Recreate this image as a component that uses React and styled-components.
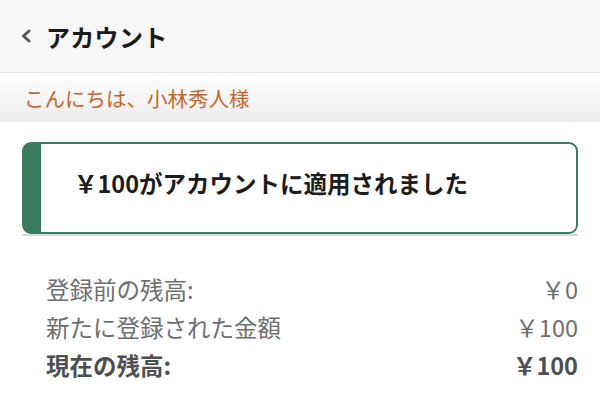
import React from "react";
import styled, { createGlobalStyle } from "styled-components";

const Global = createGlobalStyle`
  html, body { margin: 0; padding: 0; background: #ffffff; }
  body { font-family: "Noto Sans CJK JP", "Noto Sans", sans-serif; }
`;

const Page = styled.div`
  width: 600px;
  height: 417px;
  background: #ffffff;
  overflow: hidden;
`;

const Header = styled.header`
  height: 72px;
  background: #f7f7f7;
  border-bottom: 1px solid #e2e2e2;
  display: flex;
  align-items: center;
  padding-left: 20px;
  gap: 14px;
`;

const Back = styled.svg`
  width: 12px;
  height: 14px;
`;

const Title = styled.h1`
  margin: 0;
  font-size: 24px;
  font-weight: 700;
  color: #1a1a1a;
  letter-spacing: 0.3px;
`;

const Greeting = styled.div`
  height: 49px;
  background: linear-gradient(#ffffff, #ececec);
  display: flex;
  align-items: center;
  padding-left: 24px;
  font-size: 20.5px;
  color: #c4662c;
`;

const Main = styled.main`
  padding: 20px 22px 0 22px;
`;

const Card = styled.div`
  height: 92px;
  border: 2px solid #3b7c60;
  border-left: 19px solid #3b7c60;
  border-radius: 9px;
  background: #ffffff;
  padding: 22px 0 0 33px;
  box-sizing: border-box;
  font-size: 23.5px;
  line-height: 34px;
  font-weight: 700;
  color: #1c1c1c;
`;

const Rule = styled.div`
  height: 2px;
  background: #d8d8d8;
`;

const Rows = styled.div`
  padding: 34px 0 0 24px;
  display: flex;
  flex-direction: column;
`;

const Row = styled.div`
  display: flex;
  justify-content: space-between;
  height: 38px;
  align-items: center;
  font-size: 23.5px;
  color: ${p => (p.$strong ? "#4f4f4f" : "#6e6e6e")};
  font-weight: ${p => (p.$strong ? 700 : 400)};
`;

export default function App() {
  return (
    <Page>
      <Global />
      <Header>
        <Back viewBox="0 0 12 14">
          <path d="M9 2 L3.5 7 L9 12" fill="none" stroke="#555" strokeWidth="3" strokeLinecap="round" strokeLinejoin="round" />
        </Back>
        <Title>アカウント</Title>
      </Header>
      <Greeting>こんにちは、小林秀人様</Greeting>
      <Main>
        <Card>￥100がアカウントに適用されました</Card>
        <Rule />
        <Rows>
          <Row><span>登録前の残高:</span><span>￥0</span></Row>
          <Row><span>新たに登録された金額</span><span>￥100</span></Row>
          <Row $strong><span>現在の残高:</span><span>￥100</span></Row>
        </Rows>
      </Main>
    </Page>
  );
}
